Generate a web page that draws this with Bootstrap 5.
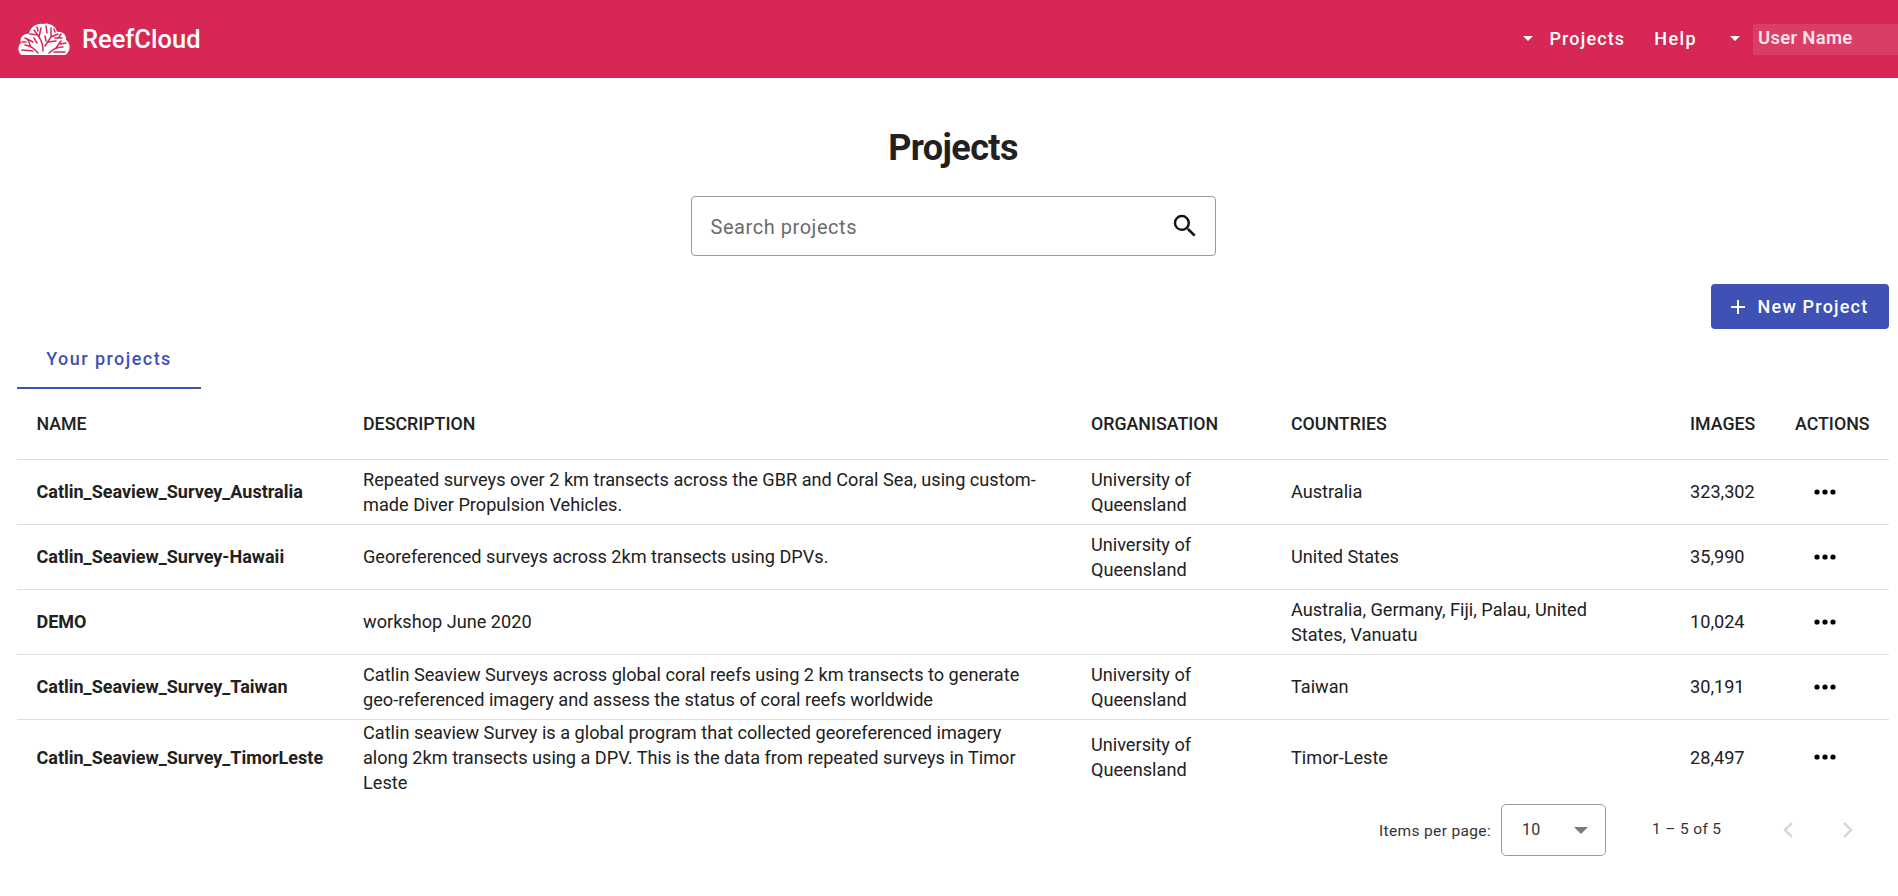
<!DOCTYPE html>
<html lang="en">
<head>
    <meta charset="UTF-8">
    <meta name="viewport" content="width=device-width, initial-scale=1.0">
    <title>ReefCloud - Projects</title>
    <link href="https://cdn.jsdelivr.net/npm/bootstrap@5.3.3/dist/css/bootstrap.min.css" rel="stylesheet">
    <script src="https://cdn.jsdelivr.net/npm/bootstrap@5.3.3/dist/js/bootstrap.bundle.min.js"></script>
    <style>
        body { font-family: Roboto, "Liberation Sans", sans-serif; color: #212121; background: #fff; overflow: hidden; }

        /* header */
        .rc-bar { height: 78px; background: #d62755; padding: 0; align-items: center; flex-wrap: nowrap; }
        .rc-brand { display: flex; align-items: center; gap: 12px; padding: 0 0 0 18px; margin: 0; color: #fff; font-size: 25.5px; font-weight: 500; }
        .rc-brand:hover { color: #fff; }
        .rc-link { color: #fff; font-size: 18px; font-weight: 500; letter-spacing: 1.15px; text-decoration: none; display: flex; align-items: center; }
        .rc-link:hover { color: #fff; }
        .rc-links { margin-top: -1px; }
        .rc-caret { width: 0; height: 0; border-left: 5px solid transparent; border-right: 5px solid transparent; border-top: 5px solid #fff; }
        .rc-projects { margin-right: 29px; gap: 16px; }
        .rc-help { margin-right: 33px; letter-spacing: 1.4px; }
        .rc-user { gap: 13px; }
        .rc-user-name { width: 145px; height: 31px; margin-top: 1px; background: rgba(255,255,255,.1); color: #f8e3e8; padding: 0 0 1px 5px; display: flex; align-items: center; letter-spacing: .3px; font-size: 18.5px; font-weight: 600; }

        /* title and search */
        .rc-title { font-size: 36px; font-weight: 700; letter-spacing: -.6px; line-height: 44px; margin: 48px 0 26px 8px; text-align: center; color: #212121; }
        .rc-search { width: 525px; height: 60px; margin: 0 auto 28px; border: 1px solid #9b9b9b; border-radius: 4px; display: flex; align-items: center; padding: 0 15px 0 19px; position: relative; left: 4px; }
        .rc-search input { border: 0; outline: 0; flex: 1 1 auto; font-size: 20px; letter-spacing: .55px; color: #212121; padding: 2px 0 0; background: transparent; font-family: inherit; }
        .rc-search input::placeholder { color: #6b6b6b; opacity: 1; }

        /* main */
        .rc-main { padding: 0 9px 0 17px; }
        .rc-new { background: #3f51b5; border: 0; color: #fff; width: 178px; height: 45px; border-radius: 4px; font-size: 18px; font-weight: 500; letter-spacing: 1.2px; display: flex; align-items: center; justify-content: center; gap: 13px; padding: 0 1px 0 0; }
        .rc-new:hover { background: #3f51b5; color: #fff; }
        .rc-tabs { border: 0; margin-top: -1px; }
        .rc-tab { display: block; width: 184px; height: 61px; line-height: 62px; padding: 0; text-align: center; color: #3f51b5; font-size: 18px; font-weight: 500; letter-spacing: 1.45px; border-bottom: 2px solid #3f51b5; text-decoration: none; }
        .rc-tab:hover { color: #3f51b5; }

        /* table */
        .rc-table { table-layout: fixed; margin: 0; width: 100%; font-size: 18.15px; color: #212121; }
        .rc-table th, .rc-table td { padding: 0 19px; vertical-align: middle; line-height: 25px; border-bottom: 1px solid #e0e0e0; box-shadow: none; color: #212121; }
        .rc-table thead th { height: 70px; font-weight: 500; font-size: 17.8px; white-space: nowrap; }
        .rc-table tbody td { height: 65px; }
        .rc-table tbody td:nth-child(2) { padding-right: 27px; }
        .rc-table tbody td:nth-child(4) { padding-right: 60px; }
        .rc-table tbody tr:last-child td { height: 76px; border-bottom: 0; }
        .rc-table tbody td.rc-name { font-weight: 700; font-size: 18px; padding-right: 0; padding-left: 19.5px; }
        .rc-table thead th:first-child { padding-left: 19.5px; }
        .rc-dots { width: 59px; display: flex; justify-content: center; }

        /* paginator */
        .rc-pager { height: 70px; padding-right: 35px; align-items: center; justify-content: flex-end; font-size: 15.5px; letter-spacing: .35px; color: #333; }
        .rc-items { position: relative; top: 2px; }
        .rc-select { width: 105px; height: 52px; margin: 0 46px 0 10px; border: 1px solid #9b9b9b; border-radius: 5px; display: flex; align-items: center; justify-content: space-between; padding: 0 17px 0 20px; font-size: 16px; }
        .rc-arrow { width: 0; height: 0; border-left: 7px solid transparent; border-right: 7px solid transparent; border-top: 7px solid #7a7a7a; }
        .rc-range { width: 69px; margin-right: 61px; white-space: nowrap; }
        .rc-chev { gap: 48px; }
    </style>
</head>
<body>

    <nav class="navbar rc-bar">
        <a class="navbar-brand rc-brand" href="#">
            <svg width="52" height="34" viewBox="0 0 52 34" aria-hidden="true">
                <path fill="#fff" d="M4 33C0 32-1 24 3 21 1 16 6 11 11 12 12 5 19 1 25 2 31 0 38 4 39 10 44 9 49 13 48 18 53 21 53 30 47 33Z"/>
                <g fill="none" stroke="#d62755" stroke-width="1.5" stroke-linecap="round">
                    <path d="M25 29C25 24 24 19 21 15L16 8M21 15 23 6M20 13 12 12M27 24 33 15 33 6M33 15 40 12M30 20 38 19"/>
                    <path d="M20 31C17 27 13 24 7 23M13 25 10 18M15 29 4 28M31 31C35 27 39 25 45 25M38 26 43 19M36 30 47 30"/>
                    <path d="M19 5 20 9M28 4 29 11M37 16 44 16M7 16 15 20M36 7 37 10M43 12 41 15M4 20 8 20M42 22 48 21M27 14 28 19M16 16 19 21"/>
                </g>
            </svg>
            ReefCloud
        </a>
        <div class="d-flex align-items-center ms-auto rc-links">
            <a class="rc-link rc-projects" href="#"><span class="rc-caret"></span>Projects</a>
            <a class="rc-link rc-help" href="#">Help</a>
            <a class="rc-link rc-user" href="#"><span class="rc-caret"></span><span class="rc-user-name">User Name</span></a>
        </div>
    </nav>

    <h1 class="rc-title">Projects</h1>

    <div class="rc-search">
        <input type="text" placeholder="Search projects">
        <svg width="30" height="30" viewBox="0 0 24 24" aria-hidden="true"><path fill="#111" d="M15.5 14h-.79l-.28-.27A6.47 6.47 0 0 0 16 9.5 6.5 6.5 0 1 0 9.5 16c1.61 0 3.09-.59 4.23-1.57l.27.28v.79l5 4.99L20.49 19l-4.99-5zm-6 0C7.01 14 5 11.99 5 9.5S7.01 5 9.5 5 14 7.01 14 9.5 11.99 14 9.5 14z"/></svg>
    </div>

    <div class="rc-main">
        <div class="d-flex justify-content-end">
            <button class="btn rc-new" type="button">
                <svg width="14" height="14" viewBox="0 0 14 14" aria-hidden="true"><path fill="#fff" d="M6 0h2v6h6v2H8v6H6V8H0V6h6z"/></svg>
                New Project
            </button>
        </div>

        <ul class="nav rc-tabs">
            <li class="nav-item"><a class="rc-tab" href="#">Your projects</a></li>
        </ul>

        <table class="table rc-table">
            <colgroup>
                <col style="width:327px"><col style="width:728px"><col style="width:200px"><col style="width:399px"><col style="width:105px"><col>
            </colgroup>
            <thead>
                <tr><th>NAME</th><th>DESCRIPTION</th><th>ORGANISATION</th><th>COUNTRIES</th><th>IMAGES</th><th>ACTIONS</th></tr>
            </thead>
            <tbody id="rows"></tbody>
        </table>

        <div class="d-flex rc-pager">
            <span class="rc-items">Items per page:</span>
            <div class="rc-select"><span>10</span><span class="rc-arrow"></span></div>
            <span class="rc-range">1 – 5 of 5</span>
            <div class="d-flex rc-chev">
                <svg width="12" height="20" viewBox="0 0 12 20" aria-hidden="true"><path fill="none" stroke="#d6d6d6" stroke-width="2.4" d="M10 3 3 10l7 7"/></svg>
                <svg width="12" height="20" viewBox="0 0 12 20" aria-hidden="true"><path fill="none" stroke="#d6d6d6" stroke-width="2.4" d="m2 3 7 7-7 7"/></svg>
            </div>
        </div>
    </div>

<script>
    const uq = 'University of Queensland';
    const projects = [
        ['Catlin_Seaview_Survey_Australia', 'Repeated surveys over 2 km transects across the GBR and Coral Sea, using custom-made Diver Propulsion Vehicles.', uq, 'Australia', '323,302'],
        ['Catlin_Seaview_Survey-Hawaii', 'Georeferenced surveys across 2km transects using DPVs.', uq, 'United States', '35,990'],
        ['DEMO', 'workshop June 2020', '', 'Australia, Germany, Fiji, Palau, United States, Vanuatu', '10,024'],
        ['Catlin_Seaview_Survey_Taiwan', 'Catlin Seaview Surveys across global coral reefs using 2 km transects to generate geo-referenced imagery and assess the status of coral reefs worldwide', uq, 'Taiwan', '30,191'],
        ['Catlin_Seaview_Survey_TimorLeste', 'Catlin seaview Survey is a global program that collected georeferenced imagery along 2km transects using a DPV. This is the data from repeated surveys in Timor Leste', uq, 'Timor-Leste', '28,497'],
    ];
    const dots = '<div class="rc-dots"><svg width="22" height="6" viewBox="0 0 22 6" aria-hidden="true"><circle cx="3" cy="3" r="2.6"/><circle cx="11" cy="3" r="2.6"/><circle cx="19" cy="3" r="2.6"/></svg></div>';
    const tbody = document.getElementById('rows');
    for (let i = 0; i < projects.length; i++) {
        const p = projects[i];
        tbody.insertAdjacentHTML('beforeend', '<tr><td class="rc-name">' + p[0] + '</td><td>' + p[1] + '</td><td>' + p[2] + '</td><td>' + p[3] + '</td><td>' + p[4] + '</td><td>' + dots + '</td></tr>');
    }
</script>
</body>
</html>
